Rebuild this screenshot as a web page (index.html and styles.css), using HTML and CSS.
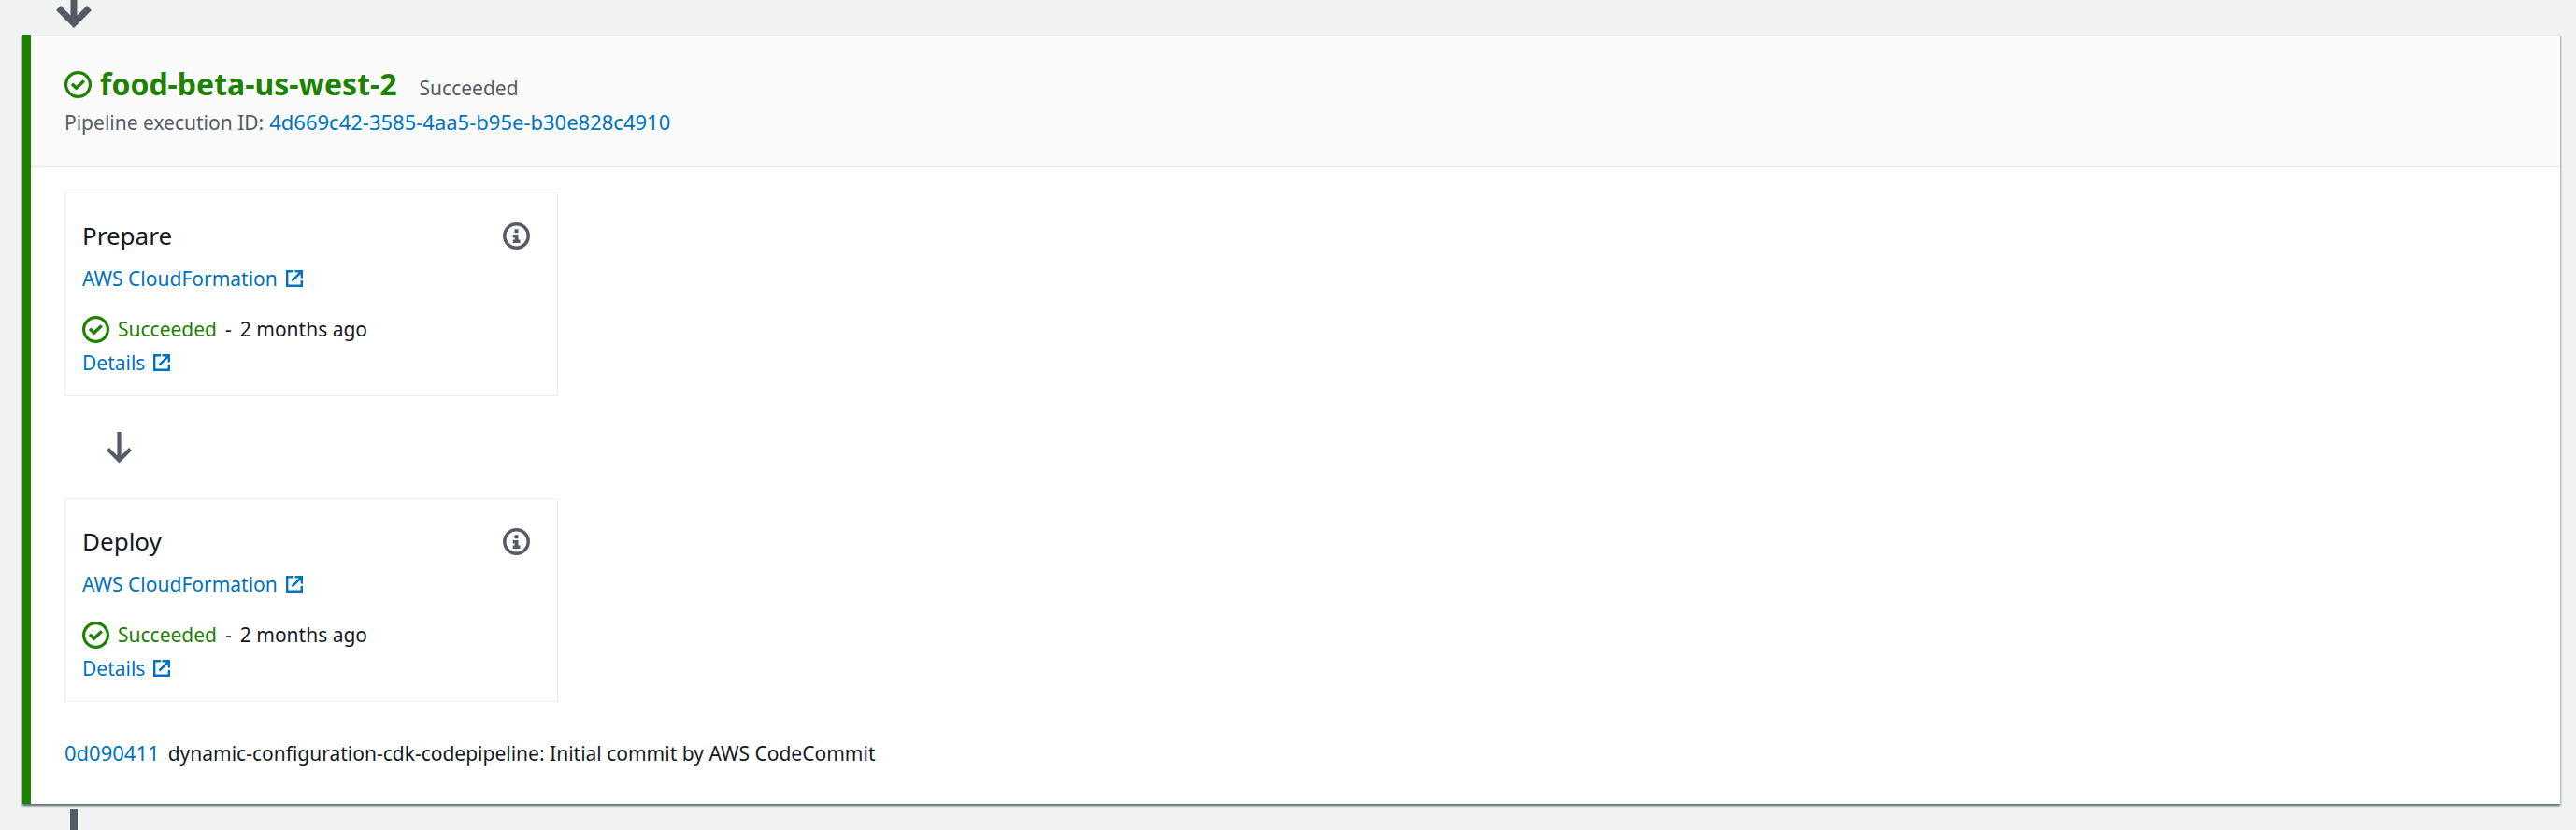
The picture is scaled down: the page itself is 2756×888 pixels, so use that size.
FILE: index.html
```html
<!DOCTYPE html>
<html lang="en">
<head>
<meta charset="utf-8">
<meta name="viewport" content="width=device-width, initial-scale=1">
<title>food-beta-us-west-2</title>
<link rel="stylesheet" href="styles.css">
</head>
<body>
<svg class="symbols" aria-hidden="true">
  <symbol id="check" viewBox="0 0 29 29">
    <circle cx="14.5" cy="14.5" r="12.9" fill="none" stroke="currentColor" stroke-width="3.2"/>
    <path d="M8 13.700l4.600 4.400 8.200-7.700" fill="none" stroke="currentColor" stroke-width="3.400"/>
  </symbol>
  <symbol id="external" viewBox="0 0 18 18">
    <path d="M8 1.200H1.200v15.600h15.600V11" fill="none" stroke="currentColor" stroke-width="2.400"/>
    <path d="M9.500 0H18v8.500h-2.400V4.200L7.300 12.500 5.500 10.700 13.800 2.400H9.500z" fill="currentColor"/>
  </symbol>
  <symbol id="info" viewBox="0 0 29 29">
    <circle cx="14.500" cy="14.500" r="12.700" fill="none" stroke="currentColor" stroke-width="3.500"/>
    <path d="M12.500 7.200h4v4h-4zM10.700 13h5.800v5.400h2V22h-7.800v-3.600h2v-2h-2z" fill="currentColor"/>
  </symbol>
</svg>
<main class="pipeline">
  <div class="connector">
    <svg class="connector-arrow" viewBox="0 0 38 30" aria-hidden="true"><path d="M19 0v24M2.500 8.500L19 25 35.500 8.500" fill="none" stroke="currentColor" stroke-width="7"/></svg>
  </div>
  <section class="stage">
    <header class="stage-header">
      <div class="stage-title">
        <svg class="icon ok" aria-hidden="true"><use href="#check"/></svg>
        <h2>food-beta-us-west-2</h2>
        <span class="stage-status">Succeeded</span>
      </div>
      <p class="execution"><span>Pipeline execution ID:</span><a class="hash" href="#execution">4d669c42-3585-4aa5-b95e-b30e828c4910</a></p>
    </header>
    <div class="stage-body">
      <article class="action">
        <div class="action-head">
          <h3>Prepare</h3>
          <button class="info" type="button" aria-label="Prepare information"><svg class="icon" aria-hidden="true"><use href="#info"/></svg></button>
        </div>
        <p class="provider"><a class="external" href="#cloudformation">AWS CloudFormation<svg class="icon-small" aria-hidden="true"><use href="#external"/></svg></a></p>
        <p class="status"><svg class="icon ok" aria-hidden="true"><use href="#check"/></svg><span class="ok">Succeeded</span><span>-</span><span>2 months ago</span></p>
        <p><a class="external" href="#prepare-details">Details<svg class="icon-small" aria-hidden="true"><use href="#external"/></svg></a></p>
      </article>
      <div class="action-connector">
        <svg class="action-arrow" viewBox="0 0 27 34" aria-hidden="true"><path d="M13.500 0v30M1.500 18.500l12 12 12-12" fill="none" stroke="currentColor" stroke-width="4.200"/></svg>
      </div>
      <article class="action">
        <div class="action-head">
          <h3>Deploy</h3>
          <button class="info" type="button" aria-label="Deploy information"><svg class="icon" aria-hidden="true"><use href="#info"/></svg></button>
        </div>
        <p class="provider"><a class="external" href="#cloudformation">AWS CloudFormation<svg class="icon-small" aria-hidden="true"><use href="#external"/></svg></a></p>
        <p class="status"><svg class="icon ok" aria-hidden="true"><use href="#check"/></svg><span class="ok">Succeeded</span><span>-</span><span>2 months ago</span></p>
        <p><a class="external" href="#deploy-details">Details<svg class="icon-small" aria-hidden="true"><use href="#external"/></svg></a></p>
      </article>
      <p class="commit"><a class="hash" href="#commit">0d090411</a><span>dynamic-configuration-cdk-codepipeline: Initial commit by AWS CodeCommit</span></p>
    </div>
  </section>
  <div class="connector-stem"></div>
</main>
</body>
</html>
```

FILE: styles.css
```css
* {
  box-sizing: border-box;
}

body {
  margin: 0;
  background: #f1f3f3;
  color: #16191f;
  font: 21px/36px "Noto Sans", "Open Sans", sans-serif;
}

h2, h3, p {
  margin: 0;
}

a {
  color: #0073bb;
  text-decoration: none;
}

a:hover {
  text-decoration: underline;
}

.symbols {
  display: none;
}

.pipeline {
  display: flex;
  flex-direction: column;
  height: 100vh;
  padding: 0 17px 0 24px;
  overflow: hidden;
}

.connector {
  flex: none;
  height: 37px;
  padding-left: 36px;
  color: #545b64;
}

.connector-arrow {
  display: block;
  width: 38px;
  height: 30px;
}

.connector-stem {
  flex: 1;
  width: 8px;
  margin: 5px 0 0 51px;
  background: #545b64;
}

.stage {
  flex: none;
  border-left: 9px solid #1d8102;
  background: #fff;
  box-shadow: 0 2px 2px rgba(0, 28, 36, 0.4), 1px 2px 2px rgba(0, 28, 36, 0.2), -1px 2px 2px rgba(0, 28, 36, 0.2);
}

.stage-header {
  padding: 29px 36px;
  border-top: 2px solid #eaeded;
  border-bottom: 1px solid #e4e7e7;
  background: #fafafa;
}

.stage-title {
  display: flex;
  align-items: baseline;
  color: #1d8102;
}

.stage-title h2 {
  margin-left: 9px;
  font-size: 32px;
  line-height: 44px;
}

.stage-title .icon {
  align-self: center;
}

.stage-status {
  margin-left: 24px;
  color: #545b64;
}

.execution {
  display: flex;
  align-items: baseline;
  gap: 6px;
  color: #545b64;
}

.hash {
  font-size: 22px;
}

.stage-body {
  padding: 27px 36px 36px;
}

.action {
  max-width: 528px;
  padding: 23px 18px 17px;
  border: 1px solid #eaeded;
}

.action-head {
  display: flex;
  align-items: center;
  justify-content: space-between;
}

.action-head h3 {
  font-size: 26px;
  font-weight: 400;
  line-height: 44px;
}

.info {
  display: flex;
  margin-right: 11px;
  padding: 0;
  border: 0;
  background: none;
  color: #545b64;
}

.provider {
  margin: 6px 0 18px;
}

.external {
  display: inline-flex;
  align-items: center;
  gap: 9px;
  vertical-align: top;
}

.status {
  display: flex;
  align-items: center;
  gap: 9px;
}

.icon {
  display: block;
  flex: none;
  width: 29px;
  height: 29px;
}

.icon-small {
  display: block;
  flex: none;
  width: 18px;
  height: 18px;
}

.ok {
  color: #1d8102;
}

.action-connector {
  display: flex;
  align-items: center;
  height: 109px;
  padding-left: 45px;
  color: #545b64;
}

.action-arrow {
  width: 27px;
  height: 34px;
}

.commit {
  display: flex;
  align-items: baseline;
  gap: 9px;
  margin-top: 36px;
}
```
